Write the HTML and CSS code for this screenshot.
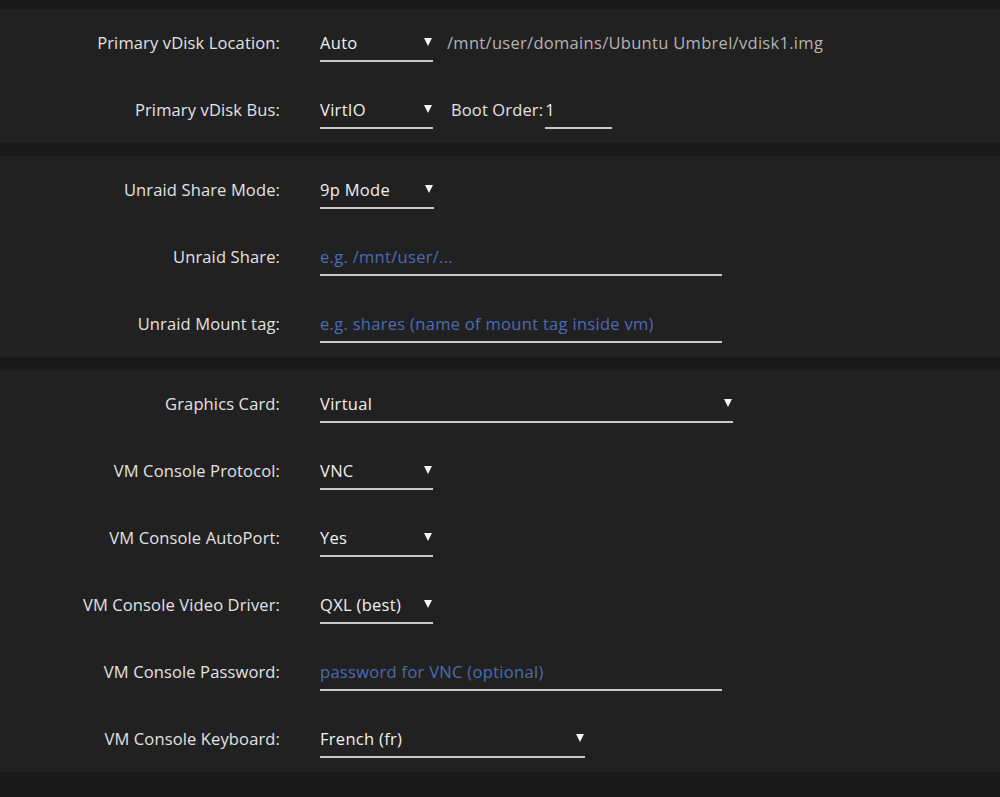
FILE: index.html
```html
<!DOCTYPE html>
<html lang="en">
<head>
    <meta charset="UTF-8">
    <meta name="viewport" content="width=device-width, initial-scale=1.0">
    <title>VM Settings</title>
    <link rel="stylesheet" href="styles.css">
</head>
<body>
    <div class="page">
        <section class="panel">
            <div class="row">
                <label class="label">Primary vDisk Location:</label>
                <div class="field">
                    <div class="select w-sm"><span>Auto</span><i class="arrow"></i></div>
                    <span class="path">/mnt/user/domains/Ubuntu Umbrel/vdisk1.img</span>
                </div>
            </div>
            <div class="row">
                <label class="label">Primary vDisk Bus:</label>
                <div class="field">
                    <div class="select w-sm"><span>VirtIO</span><i class="arrow"></i></div>
                    <span class="inline-label">Boot Order:</span>
                    <div class="input w-xs"><span>1</span></div>
                </div>
            </div>
        </section>

        <section class="panel">
            <div class="row">
                <label class="label">Unraid Share Mode:</label>
                <div class="field">
                    <div class="select w-sm2"><span>9p Mode</span><i class="arrow"></i></div>
                </div>
            </div>
            <div class="row">
                <label class="label">Unraid Share:</label>
                <div class="field">
                    <div class="input w-lg"><span class="placeholder">e.g. /mnt/user/...</span></div>
                </div>
            </div>
            <div class="row">
                <label class="label">Unraid Mount tag:</label>
                <div class="field">
                    <div class="input w-lg"><span class="placeholder">e.g. shares (name of mount tag inside vm)</span></div>
                </div>
            </div>
        </section>

        <section class="panel">
            <div class="row">
                <label class="label">Graphics Card:</label>
                <div class="field">
                    <div class="select w-xl"><span>Virtual</span><i class="arrow"></i></div>
                </div>
            </div>
            <div class="row">
                <label class="label">VM Console Protocol:</label>
                <div class="field">
                    <div class="select w-sm"><span>VNC</span><i class="arrow"></i></div>
                </div>
            </div>
            <div class="row">
                <label class="label">VM Console AutoPort:</label>
                <div class="field">
                    <div class="select w-sm"><span>Yes</span><i class="arrow"></i></div>
                </div>
            </div>
            <div class="row">
                <label class="label">VM Console Video Driver:</label>
                <div class="field">
                    <div class="select w-sm"><span>QXL (best)</span><i class="arrow"></i></div>
                </div>
            </div>
            <div class="row">
                <label class="label">VM Console Password:</label>
                <div class="field">
                    <div class="input w-lg"><span class="placeholder">password for VNC (optional)</span></div>
                </div>
            </div>
            <div class="row">
                <label class="label">VM Console Keyboard:</label>
                <div class="field">
                    <div class="select w-md"><span>French (fr)</span><i class="arrow"></i></div>
                </div>
            </div>
        </section>
    </div>
</body>
</html>
```

FILE: styles.css
```css
* {
    margin: 0;
    padding: 0;
    box-sizing: border-box;
}

body {
    background-color: #191919;
    font-family: "Open Sans", "Noto Sans", sans-serif;
    font-size: 16.5px;
    letter-spacing: 0.3px;
    color: #e6e6e6;
}

.page {
    padding-top: 9px;
    display: flex;
    flex-direction: column;
    gap: 13px;
}

.panel {
    background-color: #212121;
}

.row {
    height: 67px;
    display: flex;
    align-items: center;
    gap: 40px;
}

.label {
    width: 280px;
    text-align: right;
    line-height: 20px;
    letter-spacing: 0.13px;
    color: #e2e2e2;
}

.field {
    display: flex;
    align-items: center;
}

.select,
.input {
    display: flex;
    align-items: center;
    justify-content: space-between;
    line-height: 20px;
    padding: 9px 0 7px;
    border-bottom: 2px solid #c8c8c8;
    color: #f0f0f0;
}

.arrow {
    width: 0;
    height: 0;
    border-left: 4px solid transparent;
    border-right: 4px solid transparent;
    border-top: 8px solid #f4f4f4;
    margin-right: 1px;
    margin-top: -2px;
}

.path {
    margin-left: 14px;
    color: #b4b4b4;
    line-height: 20px;
}

.inline-label {
    margin-left: 18px;
    margin-right: 2px;
    line-height: 20px;
    letter-spacing: 0.13px;
    color: #e2e2e2;
}

.placeholder {
    color: #4a6db5;
}

.w-xs { width: 67px; }
.w-sm { width: 113px; }
.w-sm2 { width: 114px; }
.w-md { width: 265px; }
.w-lg { width: 402px; }
.w-xl { width: 413px; }
```
